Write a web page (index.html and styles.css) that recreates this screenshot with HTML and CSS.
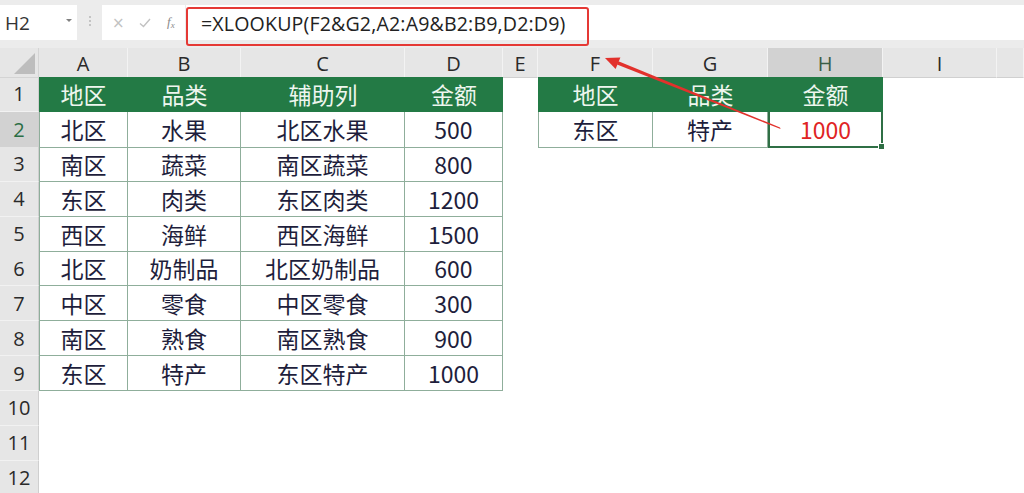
FILE: index.html
```html
<!DOCTYPE html>
<html lang="zh">
<head>
<meta charset="utf-8">
<title>XLOOKUP</title>
<link rel="stylesheet" href="styles.css">
</head>
<body>
<div class="app">
  <div class="fbar">
    <div class="namebox"><span class="ref">H2</span><span class="dd"></span></div>
    <div class="grip"><i></i><i></i><i></i></div>
    <div class="btns">
      <span class="b-x">×</span>
      <span class="b-ok"><svg width="12" height="10" viewBox="0 0 12 10"><path d="M1 5.5 L4.5 8.5 L11 1" fill="none" stroke="#c2c2c2" stroke-width="1.4"/></svg></span>
      <span class="b-fx">f<sub>x</sub></span>
    </div>
    <div class="formula">
      <span class="ftext">=XLOOKUP(F2&amp;G2,A2:A9&amp;B2:B9,D2:D9)</span>
      <div class="redbox"></div>
    </div>
  </div>

  <div class="sheet">
    <div class="row colhdr">
      <div class="corner"><span class="tri"></span></div>
      <div class="ch">A</div><div class="ch">B</div><div class="ch">C</div><div class="ch">D</div><div class="ch">E</div>
      <div class="ch">F</div><div class="ch">G</div><div class="ch sel">H</div><div class="ch">I</div><div class="ch"></div>
    </div>

    <div class="row">
      <div class="rh">1</div>
      <div class="c hd">地区</div><div class="c hd">品类</div><div class="c hd">辅助列</div><div class="c hd">金额</div>
      <div class="c"></div>
      <div class="c hd">地区</div><div class="c hd">品类</div><div class="c hd">金额</div>
      <div class="c"></div><div class="c"></div>
    </div>

    <div class="row">
      <div class="rh sel">2</div>
      <div class="c t tl">北区</div><div class="c t">水果</div><div class="c t">北区水果</div><div class="c t">500</div>
      <div class="c"></div>
      <div class="c t tl">东区</div><div class="c t">特产</div><div class="c t active red">1000</div>
      <div class="c"></div><div class="c"></div>
    </div>

    <div class="row">
      <div class="rh">3</div>
      <div class="c t tl">南区</div><div class="c t">蔬菜</div><div class="c t">南区蔬菜</div><div class="c t">800</div>
      <div class="c"></div><div class="c"></div><div class="c"></div><div class="c"></div><div class="c"></div><div class="c"></div>
    </div>

    <div class="row">
      <div class="rh">4</div>
      <div class="c t tl">东区</div><div class="c t">肉类</div><div class="c t">东区肉类</div><div class="c t">1200</div>
      <div class="c"></div><div class="c"></div><div class="c"></div><div class="c"></div><div class="c"></div><div class="c"></div>
    </div>

    <div class="row">
      <div class="rh">5</div>
      <div class="c t tl">西区</div><div class="c t">海鲜</div><div class="c t">西区海鲜</div><div class="c t">1500</div>
      <div class="c"></div><div class="c"></div><div class="c"></div><div class="c"></div><div class="c"></div><div class="c"></div>
    </div>

    <div class="row">
      <div class="rh">6</div>
      <div class="c t tl">北区</div><div class="c t">奶制品</div><div class="c t">北区奶制品</div><div class="c t">600</div>
      <div class="c"></div><div class="c"></div><div class="c"></div><div class="c"></div><div class="c"></div><div class="c"></div>
    </div>

    <div class="row">
      <div class="rh">7</div>
      <div class="c t tl">中区</div><div class="c t">零食</div><div class="c t">中区零食</div><div class="c t">300</div>
      <div class="c"></div><div class="c"></div><div class="c"></div><div class="c"></div><div class="c"></div><div class="c"></div>
    </div>

    <div class="row">
      <div class="rh">8</div>
      <div class="c t tl">南区</div><div class="c t">熟食</div><div class="c t">南区熟食</div><div class="c t">900</div>
      <div class="c"></div><div class="c"></div><div class="c"></div><div class="c"></div><div class="c"></div><div class="c"></div>
    </div>

    <div class="row">
      <div class="rh">9</div>
      <div class="c t tl">东区</div><div class="c t">特产</div><div class="c t">东区特产</div><div class="c t">1000</div>
      <div class="c"></div><div class="c"></div><div class="c"></div><div class="c"></div><div class="c"></div><div class="c"></div>
    </div>

    <div class="row"><div class="rh">10</div></div>
    <div class="row"><div class="rh">11</div></div>
    <div class="row"><div class="rh">12</div></div>
  </div>

  <svg class="arrow" width="1024" height="493" viewBox="0 0 1024 493">
    <polygon points="780,127.5 780.6,129 617,64.6 618.4,61.2" fill="#e2312c"/>
    <polygon points="605,58 620.4,57.4 615.6,69" fill="#e2312c"/>
  </svg>
</div>
</body>
</html>
```

FILE: styles.css
```css
html, body {
  margin: 0;
  padding: 0;
  background: #ffffff;
  overflow: hidden;
}

.app {
  position: relative;
  width: 1024px;
  height: 493px;
  overflow: hidden;
  font-family: "Noto Sans CJK SC", "Noto Sans", sans-serif;
}

/* ---------- formula bar ---------- */
.fbar {
  display: flex;
  height: 48px;
  box-sizing: border-box;
  padding: 5px 0 8px 0;
  background: #ececec;
}

.namebox {
  width: 77px;
  background: #ffffff;
  display: flex;
  align-items: center;
  justify-content: space-between;
  padding: 0 5px 0 5px;
  box-sizing: border-box;
}

.ref {
  font-family: "Open Sans", "Noto Sans", sans-serif;
  font-size: 19px;
  color: #333333;
}

.dd {
  width: 0;
  height: 0;
  border-left: 3px solid transparent;
  border-right: 3px solid transparent;
  border-top: 3px solid #808080;
  margin-bottom: 4px;
}

.grip {
  width: 25px;
  display: flex;
  flex-direction: column;
  align-items: center;
  justify-content: center;
  gap: 2px;
  padding-bottom: 4px;
  box-sizing: border-box;
}

.grip i {
  display: block;
  width: 2px;
  height: 2px;
  background: #c4c4c4;
}

.btns {
  width: 83px;
  background: #ffffff;
  display: flex;
  align-items: center;
  padding-left: 9px;
  box-sizing: border-box;
}

.b-x {
  width: 27px;
  font-family: "DejaVu Sans", sans-serif;
  font-size: 15px;
  color: #c2c2c2;
  margin-left: 1px;
}

.b-ok {
  width: 28px;
  display: flex;
  align-items: center;
}

.b-fx {
  font-family: "Liberation Serif", serif;
  font-style: italic;
  font-size: 13px;
  color: #8a8a8a;
  line-height: 1;
}

.b-fx sub {
  font-size: 9px;
  vertical-align: -2px;
}

.formula {
  position: relative;
  flex: 1;
  margin-left: 1px;
  background: #ffffff;
  display: flex;
  align-items: center;
  padding-left: 15px;
}

.ftext {
  font-family: "Open Sans", "Noto Sans", sans-serif;
  font-size: 19.6px;
  color: #222222;
  letter-spacing: 0.15px;
  margin-top: 1px;
}

.redbox {
  position: absolute;
  left: 0;
  top: 2px;
  width: 403px;
  height: 39px;
  box-sizing: border-box;
  border: 2px solid #e53935;
  border-radius: 3px;
}

/* ---------- sheet ---------- */
.sheet {
  display: flex;
  flex-direction: column;
}

.row {
  display: grid;
  grid-template-columns: 39px 89px 113px 164px 98px 35px 115px 115px 115px 114px 27px;
  height: 34.875px;
}

.row.colhdr {
  height: 29px;
  background: #e6e6e6;
}

.corner {
  position: relative;
  background: #e6e6e6;
  border-right: 1px solid #d4d4d4;
  border-bottom: 1px solid #d4d4d4;
  box-sizing: border-box;
}

.tri {
  position: absolute;
  right: 3px;
  bottom: 3px;
  width: 0;
  height: 0;
  border-left: 21px solid transparent;
  border-bottom: 21px solid #bdbdbd;
}

.ch {
  background: #e6e6e6;
  border-right: 1px solid #f3f3f3;
  border-bottom: 1px solid #d0d0d0;
  box-sizing: border-box;
  display: flex;
  align-items: center;
  justify-content: center;
  font-family: "Open Sans", "Noto Sans", sans-serif;
  font-size: 20px;
  color: #2a2a2a;
  padding-top: 2px;
}

.ch.sel {
  background: #d2d2d2;
  color: #3b5e47;
}

.rh {
  background: #e6e6e6;
  border-right: 1px solid #cfcfcf;
  border-bottom: 1px solid #f2f2f2;
  box-sizing: border-box;
  display: flex;
  align-items: center;
  justify-content: center;
  font-family: "Open Sans", "Noto Sans", sans-serif;
  font-size: 20px;
  color: #2a2a2a;
}

.rh.sel {
  background: #d2d2d2;
  color: #2b6e44;
}

.c {
  box-sizing: border-box;
  display: flex;
  align-items: center;
  justify-content: center;
  font-size: 23px;
  color: #1e1e3c;
  white-space: nowrap;
}

.c.hd {
  background: #237a45;
  color: #eef6ef;
}

.c.t {
  border-right: 1px solid #8fae9b;
  border-bottom: 1px solid #8fae9b;
}

.c.t.tl {
  border-left: 1px solid #8fae9b;
}

.c.red {
  color: #e02424;
}

.c.active {
  position: relative;
  border: 2px solid #2f6f45;
  border-top: none;
}

.c.active::after {
  content: "";
  position: absolute;
  right: -4px;
  bottom: -4px;
  width: 5px;
  height: 5px;
  background: #2f6f45;
  border: 1px solid #ffffff;
}

.arrow {
  position: absolute;
  left: 0;
  top: 0;
  pointer-events: none;
}
```
